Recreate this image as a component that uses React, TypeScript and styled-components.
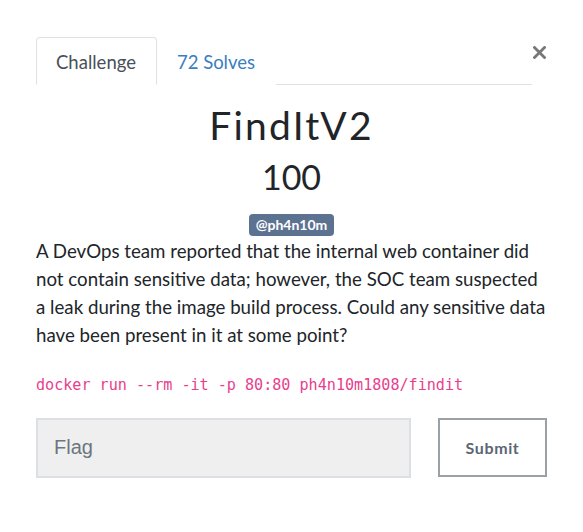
import styled, { createGlobalStyle } from "styled-components";

const GlobalStyle = createGlobalStyle`
  html, body {
    margin: 0;
    padding: 0;
    background: #ffffff;
  }

  body {
    font-family: Lato, "Open Sans", sans-serif;
    color: #212529;
  }
`;

const Modal = styled.div`
  width: 583px;
  box-sizing: border-box;
  padding: 37px 36px 40px 36px;
`;

const Header = styled.div`
  display: flex;
  align-items: flex-start;
`;

const Tabs = styled.nav`
  flex: 1;
  display: flex;
  border-bottom: 1px solid #dee2e6;
`;

const Tab = styled.a<{ $active?: boolean }>`
  display: block;
  height: 48px;
  box-sizing: border-box;
  padding: 0 20px 0 19px;
  margin-bottom: -1px;
  font-size: 18.5px;
  line-height: 48px;
  text-decoration: none;
  border: 1px solid ${({ $active }) => ($active ? "#dee2e6" : "transparent")};
  border-bottom-color: ${({ $active }) => ($active ? "#ffffff" : "transparent")};
  border-radius: 4px 4px 0 0;
  color: ${({ $active }) => ($active ? "#495057" : "#3a7ebf")};
  background: #ffffff;
  cursor: pointer;
`;

const CloseButton = styled.button`
  width: 15px;
  height: 15px;
  margin-top: 8px;
  padding: 0;
  border: none;
  background: none;
  display: grid;
  place-items: center;
  cursor: pointer;
`;

const Title = styled.h3`
  margin: 16.5px 0 0 0;
  text-align: center;
  font-size: 39px;
  font-weight: 400;
  line-height: 1.2;
  letter-spacing: 2.2px;
  color: #212529;
`;

const Value = styled.h4`
  margin: 9px 0 0 0;
  text-align: center;
  font-size: 34px;
  font-weight: 400;
  line-height: 1.2;
  color: #212529;
`;

const Tags = styled.div`
  display: flex;
  justify-content: center;
  margin-top: 16px;
`;

const Badge = styled.span`
  display: inline-block;
  height: 22px;
  box-sizing: border-box;
  padding: 0 7px;
  border-radius: 4px;
  background: #5c7291;
  color: #ffffff;
  font-size: 14px;
  font-weight: 700;
  line-height: 22px;
`;

const Description = styled.p`
  margin: 1px 0 0 0;
  font-size: 18.7px;
  line-height: 28px;
  white-space: nowrap;
  color: #212529;
`;

const Code = styled.code`
  display: block;
  margin-top: 25px;
  font-family: "DejaVu Sans Mono", "Liberation Mono", monospace;
  font-size: 15.1px;
  line-height: 22.5px;
  color: #e83e8c;
`;

const SubmitRow = styled.div`
  display: grid;
  grid-template-columns: 375px 109px;
  column-gap: 27px;
  margin-top: 21px;
`;

const FlagInput = styled.input`
  height: 60px;
  box-sizing: border-box;
  padding: 0 16px;
  border: 2px solid #dcdfe3;
  background: #efefef;
  font-family: "Liberation Sans", Arial, sans-serif;
  font-size: 20px;
  color: #495057;
  outline: none;

  &::placeholder {
    color: #6c757d;
  }
`;

const SubmitButton = styled.button`
  height: 59px;
  box-sizing: border-box;
  border: 2px solid #9ca1a6;
  background: #ffffff;
  font-family: Lato, sans-serif;
  font-size: 16px;
  font-weight: 700;
  letter-spacing: 0.6px;
  color: #5b6674;
  cursor: pointer;
`;

export default function App() {
  return (
    <>
      <GlobalStyle />
      <Modal>
        <Header>
          <Tabs>
            <Tab $active>Challenge</Tab>
            <Tab>72 Solves</Tab>
          </Tabs>
          <CloseButton type="button" aria-label="Close">
            <svg width="13" height="13" viewBox="0 0 13 13">
              <path
                d="M1.5 1.5 L11.5 11.5 M11.5 1.5 L1.5 11.5"
                stroke="#777777"
                strokeWidth="2.8"
                strokeLinecap="square"
              />
            </svg>
          </CloseButton>
        </Header>

        <Title>FindItV2</Title>
        <Value>100</Value>
        <Tags>
          <Badge>@ph4n10m</Badge>
        </Tags>

        <Description>
          A DevOps team reported that the internal web container did
          <br />
          not contain sensitive data; however, the SOC team suspected
          <br />
          a leak during the image build process. Could any sensitive data
          <br />
          have been present in it at some point?
        </Description>

        <Code>docker run --rm -it -p 80:80 ph4n10m1808/findit</Code>

        <SubmitRow>
          <FlagInput type="text" placeholder="Flag" />
          <SubmitButton type="button">Submit</SubmitButton>
        </SubmitRow>
      </Modal>
    </>
  );
}
